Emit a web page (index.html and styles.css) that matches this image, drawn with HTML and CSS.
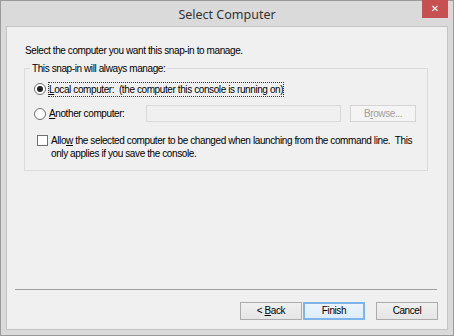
FILE: index.html
```html
<!DOCTYPE html>
<html lang="en">
<head>
    <meta charset="UTF-8">
    <title>Select Computer</title>
    <link rel="stylesheet" href="styles.css">
</head>
<body>
    <div class="window">
        <div class="titlebar">
            <span class="title">Select Computer</span>
            <button class="close-btn">&#x2715;</button>
        </div>

        <div class="content">
            <p class="intro">Select the computer you want this snap-in to manage.</p>

            <fieldset class="group">
                <legend>This snap-in will always manage:</legend>

                <div class="row row-local">
                    <span class="radio checked"></span>
                    <span class="label focus"><u>L</u>ocal computer:&nbsp; (the computer this console is running on)</span>
                </div>

                <div class="row row-another">
                    <span class="radio"></span>
                    <span class="label"><u>A</u>nother computer:</span>
                    <span class="textbox"></span>
                    <span class="btn disabled">B<u>r</u>owse...</span>
                </div>

                <div class="row row-check">
                    <span class="checkbox"></span>
                    <span class="label">Allo<u>w</u> the selected computer to be changed when launching from the command line.&nbsp; This<br>only applies if you save the console.</span>
                </div>
            </fieldset>

            <div class="footer">
                <div class="separator"></div>
                <div class="buttons">
                    <span class="btn">&lt; <u>B</u>ack</span>
                    <span class="btn default">Finish</span>
                    <span class="btn cancel">Cancel</span>
                </div>
            </div>
        </div>
    </div>
</body>
</html>
```

FILE: styles.css
```css
html, body {
    margin: 0;
    padding: 0;
}
body {
    width: 454px;
    height: 336px;
    font-family: "Liberation Sans", Arial, sans-serif;
    font-size: 10px;
    letter-spacing: -0.4px;
    color: #000;
}
.window {
    box-sizing: border-box;
    width: 454px;
    height: 336px;
    border: 1px solid #9a9a9a;
    background: #dadada;
    display: flex;
    flex-direction: column;
}
.titlebar {
    position: relative;
    height: 25px;
    display: flex;
    align-items: center;
    justify-content: center;
}
.title {
    font-family: "Noto Sans", "Open Sans", sans-serif;
    font-size: 12.5px;
    letter-spacing: 0;
    color: #333;
    margin-top: 1px;
}
/* close button sits over the title bar */
.close-btn {
    position: absolute;
    top: -1px;
    right: 5px;
    width: 26px;
    height: 18px;
    border: none;
    padding: 0;
    background: #c75050;
    color: #fff;
    font-size: 10px;
    font-weight: bold;
    font-family: "DejaVu Sans", sans-serif;
    line-height: 18px;
}
.content {
    flex: 1;
    margin: 0 5px 5px 5px;
    border: 1px solid #c4c4c4;
    background: #f0f0f0;
    padding: 17px 8px 0 18px;
    display: flex;
    flex-direction: column;
}
.intro {
    margin: 0;
    line-height: 13px;
}
.group {
    margin: 5px 0 0 -1px;
    width: 404px;
    box-sizing: border-box;
    border: 1px solid #dcdcdc;
    padding: 0;
    min-width: 0;
}
.group legend {
    padding: 0 2px;
    margin-left: 5px;
    line-height: 13px;
}
.row {
    display: flex;
    align-items: center;
    white-space: nowrap;
}
.row-local {
    margin-top: 7px;
    padding-left: 9px;
    height: 14px;
}
.row-another {
    margin-top: 9px;
    padding-left: 9px;
    height: 17px;
}
.row-check {
    margin-top: 12px;
    padding-left: 12px;
    align-items: flex-start;
    margin-bottom: 10px;
}
.radio {
    box-sizing: border-box;
    width: 12px;
    height: 12px;
    border: 1px solid #707070;
    border-radius: 50%;
    background: #fff;
    margin-right: 3px;
    display: flex;
    align-items: center;
    justify-content: center;
    flex: none;
}
.radio.checked::after {
    content: "";
    width: 6px;
    height: 6px;
    border-radius: 50%;
    background: #222;
}
.label {
    line-height: 13px;
}
.focus {
    outline: 1px dotted #333;
    outline-offset: 0;
}
.textbox {
    box-sizing: border-box;
    width: 195px;
    height: 17px;
    border: 1px solid #d9d9d9;
    background: #f0f0f0;
    margin-left: auto;
    flex: none;
}
.btn {
    box-sizing: border-box;
    display: inline-block;
    text-align: center;
    width: 62px;
    height: 18px;
    border: 1px solid #acacac;
    background: linear-gradient(#f0f0f0, #e5e5e5);
    line-height: 16px;
    white-space: nowrap;
}
.btn.disabled {
    width: 66px;
    height: 17px;
    line-height: 15px;
    margin-left: 9px;
    margin-right: 11px;
    color: #a0a0a0;
    border-color: #d5d5d5;
    background: #f4f4f4;
    flex: none;
}
.btn.default {
    border-color: #7eb4ea;
    background: linear-gradient(#ecf4fc, #dcecfc);
    border-width: 2px;
    line-height: 14px;
}
.checkbox {
    box-sizing: border-box;
    width: 11px;
    height: 11px;
    border: 1px solid #707070;
    background: #fff;
    margin-right: 3px;
    margin-top: 1px;
    flex: none;
}
.footer {
    margin-top: auto;
    margin-left: -10px;
    padding-bottom: 9px;
}
.separator {
    height: 0;
    border-top: 1px solid #a0a0a0;
    width: 422px;
}
.buttons {
    display: flex;
    justify-content: flex-end;
    margin-top: 12px;
    margin-right: 1px;
    gap: 1px;
}
.btn.cancel {
    margin-left: 10px;
}
```
